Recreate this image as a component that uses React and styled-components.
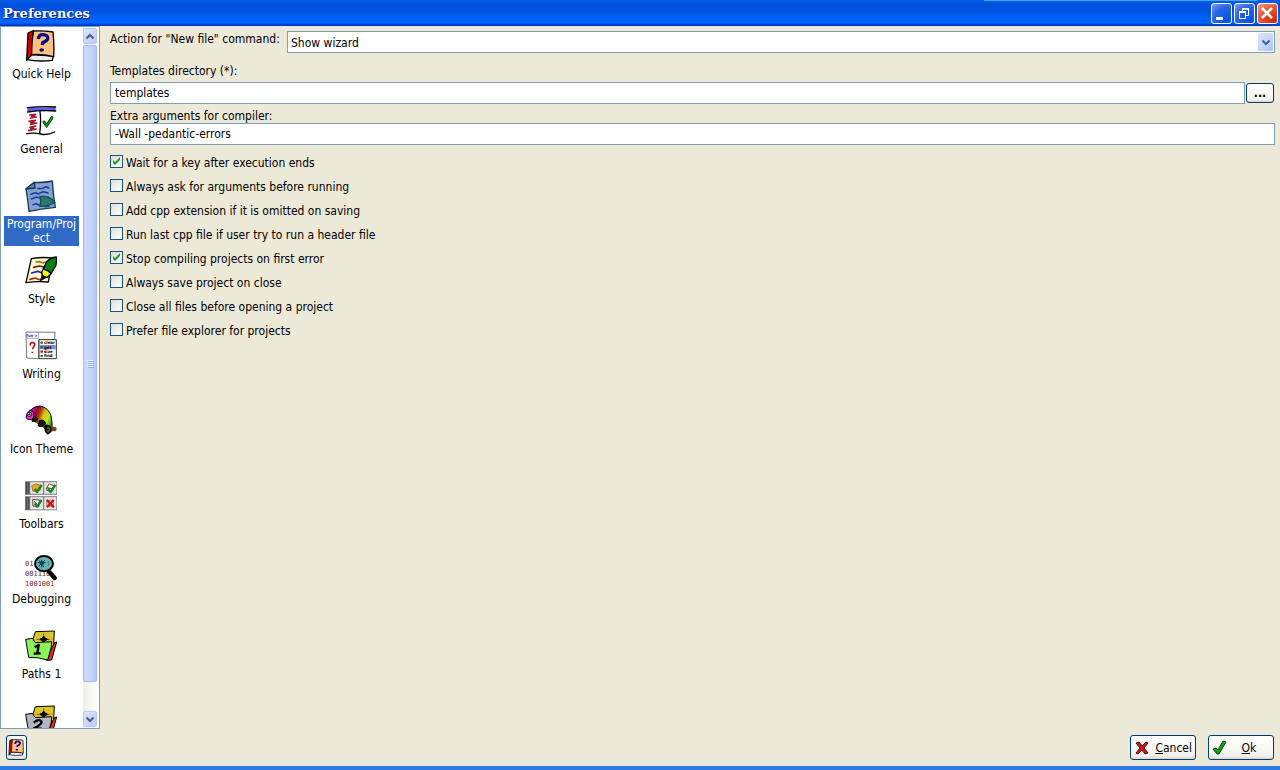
import React from 'react'
import styled, { createGlobalStyle } from 'styled-components'

const GlobalStyle = createGlobalStyle`
    * {
        box-sizing: border-box;
    }

    body {
        margin: 0;
        overflow: hidden;
    }

    body, button, input, select {
        font-family: 'DejaVu Sans Condensed', 'DejaVu Sans', sans-serif;
        font-stretch: condensed;
        font-size: 12px;
        color: #000;
    }
`

const Window = styled.div`
    display: flex;
    flex-direction: column;
    height: 100vh;
    background: #ece9d8;
    border-bottom: 4px solid #2f7be6;
`

const TitleBar = styled.header`
    position: relative;
    display: flex;
    flex: none;
    align-items: center;
    gap: 2px;
    height: 26px;
    padding: 0 2px 0 3px;
    background: linear-gradient(#0a5be8 0, #0050dd 20%, #0053e4 45%, #0060f8 65%, #0066ff 88%, #0046d8 94%, #0036c0 100%);

    /* light edge above the caption buttons */
    &::before {
        content: '';
        position: absolute;
        top: 0;
        right: 23px;
        width: 273px;
        height: 1px;
        background: #3aaaf0;
    }
`

const Title = styled.h1`
    flex: 1;
    margin: 0;
    font-family: 'DejaVu Serif', serif;
    font-stretch: normal;
    font-size: 13px;
    font-weight: bold;
    color: #fff;
    text-shadow: 1px 1px #0a1883;
`

const CaptionButton = styled.button`
    display: flex;
    width: 21px;
    height: 21px;
    padding: 0;
    border: 1px solid #fff;
    border-radius: 3px;
    background: ${props => props.$close
        ? 'radial-gradient(circle at 85% 90%, #cc2f00 0, #e2532d 55%, #f0a08a 100%)'
        : 'radial-gradient(circle at 85% 90%, #0054e9 0, #2a63e4 60%, #7d9ff0 100%)'};
`

const Body = styled.div`
    display: flex;
    flex: 1;
    min-height: 0;
`

const Sidebar = styled.nav`
    display: flex;
    flex: none;
    justify-content: space-between;
    width: 100px;
    padding-right: 2px;
    border: 1px solid #7f9db9;
    background: #fff;
`

const PageList = styled.div`
    display: flex;
    flex-direction: column;
    width: 81px;
    padding: 3px;
    overflow: hidden;
`

const PageItem = styled.button`
    display: flex;
    flex: none;
    flex-direction: column;
    align-items: center;
    gap: 4px;
    height: 75px;
    padding: 0;
    border: 0;
    background: none;
`

const PageIcon = styled.svg`
    flex: none;
    width: 32px;
    height: 32px;
    margin-right: 2px;
`

const PageLabel = styled.span`
    width: 75px;
    padding: 1px 0;
    line-height: 14px;
    word-break: break-all;
    color: ${props => props.$selected ? '#fff' : '#000'};
    background: ${props => props.$selected ? '#316ac5' : 'none'};
`

const ScrollBar = styled.div`
    display: flex;
    flex: none;
    flex-direction: column;
    width: 14px;
    padding: 1px 0;
    background: linear-gradient(90deg, #eeede5, #fefefb);
`

const ScrollButton = styled.button`
    display: flex;
    flex: none;
    align-items: center;
    justify-content: center;
    height: 16px;
    padding: 0;
    border: 1px solid #b4c8f6;
    border-radius: 2px;
    background: linear-gradient(135deg, #dbe5fe, #b9cbf8);
`

const Thumb = styled.div`
    display: flex;
    flex: 1;
    flex-direction: column;
    align-items: center;
    justify-content: center;
    gap: 1px;
    margin: 1px 0 29px;
    border: 1px solid #a5bbee;
    border-radius: 2px;
    background: linear-gradient(90deg, #c9d8fc, #c5d4fd 60%, #b4c8f6);
`

const GripLine = styled.span`
    width: 6px;
    height: 1px;
    background: #eef4fe;
    box-shadow: 1px 1px #8cb0f8;
`

const Form = styled.main`
    flex: 1;
    min-width: 0;
    padding: 5px 5px 0 10px;
`

const Field = styled.div`
    display: flex;
    align-items: center;
    gap: 1px;
`

const InlineLabel = styled.label`
    width: 176px;
    padding-bottom: 6px;
    line-height: 16px;
    white-space: nowrap;
`

const TopLabel = styled.label`
    display: block;
    padding-top: ${props => props.$tight ? 5 : 11}px;
    padding-bottom: ${props => props.$tight ? 0 : 4}px;
    line-height: 14px;
`

const TextInput = styled.input`
    flex: 1;
    width: 100%;
    min-width: 0;
    height: 22px;
    padding: 0 4px;
    border: 1px solid #7f9db9;
    background: #fff;
    outline: 0;
`

const SelectBox = styled.div`
    position: relative;
    flex: 1;
`

const Select = styled.select`
    display: block;
    width: 100%;
    height: 22px;
    padding: 1px 3px 0;
    border: 1px solid #7f9db9;
    border-radius: 0;
    background: #fff;
    appearance: none;
`

const SelectArrow = styled.span`
    position: absolute;
    top: 2px;
    right: 2px;
    display: flex;
    align-items: center;
    justify-content: center;
    width: 15px;
    height: 18px;
    border-radius: 1px;
    background: linear-gradient(135deg, #dbe5fe, #aec5f8);
    pointer-events: none;
`

const Button = styled.button`
    display: flex;
    flex: none;
    align-items: center;
    justify-content: center;
    width: ${props => props.$width}px;
    height: ${props => props.$height}px;
    padding: 0 3px;
    border: 1px solid #003c74;
    border-radius: 3px;
    background: linear-gradient(#fff, #f4f3ee 85%, #d9d5c9);
`

const BrowseButton = styled(Button)`
    margin-right: 1px;
    font-weight: bold;
`

const HelpButton = styled(Button)`
    padding: 0 1px;
`

const Checks = styled.div`
    padding-top: 5px;
`

const CheckRow = styled.div`
    display: flex;
    align-items: center;
    gap: 3px;
    height: 24px;
`

const CheckLabel = styled.label`
    padding-top: 2px;
    line-height: 15px;
`

const CheckBox = styled.input`
    width: 13px;
    height: 13px;
    margin: 0 0 1px;
    border: 1px solid #1c5180;
    background: linear-gradient(135deg, #dcdcd7, #fff);
    appearance: none;

    &:checked {
        background: url("data:image/svg+xml,%3Csvg xmlns='http://www.w3.org/2000/svg' viewBox='0 0 11 11'%3E%3Cpath d='M2 4v3l2 2 5-5V1L4 6z' fill='%2321a121'/%3E%3C/svg%3E"), linear-gradient(135deg, #dcdcd7, #fff);
    }
`

const Footer = styled.footer`
    display: flex;
    flex: none;
    justify-content: space-between;
    padding: 6px;
`

const Actions = styled.div`
    display: flex;
    gap: 12px;
`

const ActionLabel = styled.span`
    flex: 1;
    text-align: ${props => props.$align};
`

// page icons are all drawn on a 96x96 grid
const HelpArt = () => (
  <g stroke='#000' strokeWidth='4' strokeLinejoin='round'>
    <path d='M9 9 25 2 21 73 5 91z' fill='#d40000' />
    <path d='M21 74 85 78 82 91Q40 96 6 89z' fill='#eee' />
    <path d='M26 3Q55 1 84 6Q88 42 86 80Q54 72 20 74Q20 30 26 3z' fill='#ffc080' />
    <path d='M40 27Q42 13 54 14Q69 15 68 26Q66 34 53 38L52 45' fill='none' stroke='#00008c' strokeWidth='10' />
    <ellipse cx='50' cy='60' rx='7' ry='5' fill='#00008c' stroke='none' />
  </g>
)

const GeneralArt = () => (
  <g fill='none' stroke='#000' strokeWidth='4' strokeLinecap='round'>
    <path d='M7 7H92V18H7z' fill='#6060f0' stroke='none' />
    <path d='M7 8Q50 3 92 6M8 21Q50 15 92 18M45 20Q49 48 44 86M5 86Q28 82 47 87T89 81' />
    <path d='M14 30 32 28M17 39 34 36M12 49 31 46M17 58 35 54M15 67 32 63M11 77 34 72M20 34 29 32M18 53 27 52M17 72 26 69' stroke='#a51828' strokeWidth='5' />
    <path d='M57 51 65 62 81 38' stroke='#064806' strokeWidth='9' />
    <path d='M57 51 65 62 81 38' stroke='#109020' strokeWidth='5' />
  </g>
)

const ProgramArt = () => (
  <g fill='none' stroke='#193456' strokeWidth='4' strokeLinejoin='round' strokeLinecap='round'>
    <path d='M28 7Q58 9 82 3Q84 42 91 82Q48 86 12 94Q8 55 3 27z' fill='#82a4d0' />
    <path d='M28 7 30 24 3 27z' fill='#6385b6' />
    <path d='M39 26 53 25 64 20 71 24M18 43 31 38 40 42 54 35 69 39M19 57 34 51 46 54M24 74 33 71 43 76M60 80 72 78' stroke='#253ca5' strokeWidth='5' />
    <path d='M45 50Q70 44 90 67Q72 80 44 79Q50 64 45 50z' fill='#28786e' stroke='#174b58' />
  </g>
)

const StyleArt = () => (
  <g fill='none' stroke='#000' strokeWidth='4' strokeLinejoin='round' strokeLinecap='round'>
    <path d='M19 11Q50 5 84 9L70 81Q32 78 3 83z' fill='#fff9d2' />
    <path d='M33 21 45 20 53 24 65 20' stroke='#977b17' strokeWidth='5' />
    <path d='M26 37 43 33 61 37' stroke='#771818' strokeWidth='5' />
    <path d='M20 54 38 49 53 55' stroke='#2020c0' strokeWidth='5' />
    <path d='M15 73 31 69 43 74' stroke='#b52020' strokeWidth='5' />
    <path d='M94 6Q76 7 64 22L55 42Q69 45 78 56L92 33Q96 19 94 6z' fill='#078015' />
    <path d='M55 42Q69 45 78 56L67 67 53 66 50 51z' fill='#ffff00' />
    <path d='M52 61 62 67 47 76z' fill='#000' />
  </g>
)

const WritingArt = () => (
  <g stroke='#333' strokeWidth='2' fontFamily='DejaVu Sans' fontWeight='bold'>
    <path d='M3 6 90 7 89 29 41 29 41 86 5 84z' fill='#fff' />
    <path d='M4 25 41 25 41 7' fill='none' stroke='#888' />
    <text x='4' y='21' fontSize='12' fill='#2525d8' stroke='none'>fun-&gt;</text>
    <path d='M16 47Q15 36 24 38Q33 40 27 49L22 57M22 65V69' fill='none' stroke='#a01622' strokeWidth='5' />
    <path d='M42 29H94V86H42z' fill='#fff' strokeWidth='3' />
    <path d='M44 45H92V58H44z' fill='#8686d0' stroke='none' />
    <g stroke='none'>
      <circle cx='50' cy='38' r='4' fill='#147c2c' />
      <circle cx='50' cy='52' r='4' fill='#147c2c' />
      <circle cx='50' cy='65' r='4' fill='#bc2020' />
      <circle cx='50' cy='78' r='4' fill='#147c2c' />
      <text x='57' y='43' fontSize='13'>clear</text>
      <text x='57' y='56' fontSize='13'>get</text>
      <text x='57' y='69' fontSize='13'>size</text>
      <text x='57' y='82' fontSize='13'>find</text>
    </g>
  </g>
)

const ThemeArt = () => (
  <g stroke='#000' strokeWidth='3' strokeLinejoin='round'>
    <defs>
      <linearGradient id='skin' gradientUnits='userSpaceOnUse' x1='22' x2='84' y1='22' y2='46'>
        <stop offset='0' stopColor='#c010a0' />
        <stop offset='.15' stopColor='#8c0c20' />
        <stop offset='.32' stopColor='#a83010' />
        <stop offset='.52' stopColor='#e0b81c' />
        <stop offset='.75' stopColor='#b4ee18' />
        <stop offset='1' stopColor='#3c8a18' />
      </linearGradient>
    </defs>
    <path d='M12 19Q28 2 46 3Q70 8 78 32Q84 56 80 78L70 84Q60 72 54 64L24 42z' fill='url(#skin)' />
    <path d='M3 38Q4 22 16 16Q26 16 27 28Q28 38 20 44Q6 46 3 38z' fill='#ff1ee6' />
    <path d='M32 38 74 64 92 66Q99 74 90 79L72 79 28 50z' fill='#79482b' stroke='none' />
    <path d='M24 38Q33 32 38 40Q34 53 21 49zM46 45Q62 46 61 56Q50 70 39 62zM60 62Q74 58 79 70Q78 86 68 87Q58 82 60 62z' fill='#111611' />
    <path d='M66 70Q74 66 74 75Q70 82 66 77' fill='none' stroke='#48703c' strokeWidth='4' />
    <ellipse cx='13' cy='28' rx='7' ry='6' fill='#fff' />
    <circle cx='13' cy='28' r='2' />
  </g>
)

const ToolbarsArt = () => (
  <g fill='none' strokeLinejoin='round'>
    <path d='M0 4H96V44H0zM0 49H96V91H0z' fill='#777' />
    <path d='M5 6V42M11 6V42M5 51V89M11 51V89' stroke='#444' strokeWidth='3' />
    <path d='M17 8H53V40H17zM59 8H93V40H59zM17 53H53V87H17zM59 53H93V87H59z' fill='#e1e1de' stroke='#fff' strokeWidth='2' />
    <path d='M20 17 32 12 48 16 46 30 24 34z' fill='#e7a92c' stroke='#bd7418' strokeWidth='3' />
    <path d='M66 22 72 12 87 17 82 28zM64 24 85 26 80 34 65 31z' fill='#f8f8e8' stroke='#77584a' strokeWidth='3' />
    <path d='M23 58 43 60 42 80 24 78zM27 64 38 74' fill='#eee' stroke='#654b50' strokeWidth='3' />
    <path d='M65 61H85V79H65z' fill='#e4c9be' stroke='#81636b' strokeWidth='2' />
    <path d='M29 27 36 36 50 15M69 27 77 36 91 15M29 70 36 80 50 60' stroke='#168628' strokeWidth='7' />
    <path d='M65 60 87 82M86 60 66 82' stroke='#ca1814' strokeWidth='7' />
  </g>
)

const DebugArt = () => (
  <g fontFamily='DejaVu Sans Mono' fontSize='21' fill='#662b32'>
    <text x='0' y='32'>01</text>
    <text x='0' y='63'>001110</text>
    <text x='0' y='94'>1001001</text>
    <path d='M73 51 89 69' stroke='#000' strokeWidth='13' strokeLinecap='round' />
    <ellipse cx='57' cy='26' rx='27' ry='23' fill='#65b5b5' stroke='#000' strokeWidth='6' />
    <path d='M38 23H62M40 34 60 16M42 16 57 36M50 14V38' fill='none' stroke='#103b44' strokeWidth='3' />
    <circle cx='50' cy='25' r='6' fill='#173f48' />
    <path d='M70 18 72 34' stroke='#468b8d' strokeWidth='3' />
  </g>
)

const PathsArt = ({ color, digit }) => (
  <g stroke='#000' strokeWidth='3' strokeLinejoin='round'>
    <path d='M82 41 95 36 80 90 64 91z' fill='#df2d20' />
    <path d='M31 5 88 3 86 42 71 75 20 40z' fill='#d9c52b' />
    <path d='M56 11V43M35 28H80' stroke='#a02216' strokeDasharray='6 5' />
    <path d='M56 18 60 24 68 28 60 32 56 38 52 32 44 28 52 24z' fill='#000' />
    <path d='M2 28 22 25 31 38 80 35 79 51 68 90Q38 81 11 82z' fill={color} />
    {digit === 1
      ? <path d='M29 52 41 45 37 70M26 71 47 70' fill='none' strokeWidth='7' />
      : <path d='M26 53Q43 39 50 51Q48 60 27 70L50 71' fill='none' strokeWidth='7' />}
  </g>
)

const Chevron = ({ up }) => (
  <svg width='8' height='7' viewBox='0 0 8 7' fill='none' stroke='#4d6185' strokeWidth='2'>
    <path d={up ? 'M.5 5.5 4 2 7.5 5.5' : 'M.5 1.5 4 5 7.5 1.5'} />
  </svg>
)

// the last page sits below the fold, only its icon shows
const pages = [
  { id: 'help', label: 'Quick Help', art: <HelpArt /> },
  { id: 'general', label: 'General', art: <GeneralArt /> },
  { id: 'program', label: 'Program/Project', art: <ProgramArt />, selected: true },
  { id: 'style', label: 'Style', art: <StyleArt /> },
  { id: 'writing', label: 'Writing', art: <WritingArt /> },
  { id: 'theme', label: 'Icon Theme', art: <ThemeArt /> },
  { id: 'toolbars', label: 'Toolbars', art: <ToolbarsArt /> },
  { id: 'debug', label: 'Debugging', art: <DebugArt /> },
  { id: 'paths1', label: 'Paths 1', art: <PathsArt color='#8cf25a' digit={1} /> },
  { id: 'paths2', art: <PathsArt color='#b4b4c2' digit={2} /> }
]

const options = [
  { id: 'wait', label: 'Wait for a key after execution ends', on: true },
  { id: 'args', label: 'Always ask for arguments before running' },
  { id: 'cpp', label: 'Add cpp extension if it is omitted on saving' },
  { id: 'header', label: 'Run last cpp file if user try to run a header file' },
  { id: 'stop', label: 'Stop compiling projects on first error', on: true },
  { id: 'save', label: 'Always save project on close' },
  { id: 'close', label: 'Close all files before opening a project' },
  { id: 'explorer', label: 'Prefer file explorer for projects' }
]

class App extends React.Component {
  render () {
    return (
      <Window>
        <GlobalStyle />
        <TitleBar>
          <Title>Preferences</Title>
          <CaptionButton aria-label='Minimize'>
            <svg width='19' height='19'><path d='M4 13H11V16H4z' fill='#fff' /></svg>
          </CaptionButton>
          <CaptionButton aria-label='Restore'>
            <svg width='19' height='19' fill='none' stroke='#fff'>
              <path d='M7 5.5H14M7.5 5V8M13.5 5V11.5H11M4 8.5H11M4.5 8V14.5H10.5V8' />
              <path d='M7 4.5H14M4 7.5H11' />
            </svg>
          </CaptionButton>
          <CaptionButton $close aria-label='Close'>
            <svg width='19' height='19'><path d='M4 4 14 14M14 4 4 14' stroke='#fff' strokeWidth='2.6' /></svg>
          </CaptionButton>
        </TitleBar>
        <Body>
          <Sidebar>
            <PageList>
              {pages.map(page => (
                <PageItem key={page.id} aria-label={page.label || 'Paths 2'}>
                  <PageIcon viewBox='0 0 96 96'>{page.art}</PageIcon>
                  {page.label && <PageLabel $selected={page.selected}>{page.label}</PageLabel>}
                </PageItem>
              ))}
            </PageList>
            <ScrollBar>
              <ScrollButton aria-label='Scroll up'><Chevron up /></ScrollButton>
              <Thumb>
                <GripLine />
                <GripLine />
                <GripLine />
                <GripLine />
              </Thumb>
              <ScrollButton aria-label='Scroll down'><Chevron /></ScrollButton>
            </ScrollBar>
          </Sidebar>
          <Form>
            <Field>
              <InlineLabel htmlFor='action'>Action for "New file" command:</InlineLabel>
              <SelectBox>
                <Select id='action'>
                  <option>Show wizard</option>
                </Select>
                <SelectArrow><Chevron /></SelectArrow>
              </SelectBox>
            </Field>
            <TopLabel htmlFor='templates'>Templates directory (*):</TopLabel>
            <Field>
              <TextInput id='templates' defaultValue='templates' />
              <BrowseButton $width={28} $height={20}>...</BrowseButton>
            </Field>
            <TopLabel $tight htmlFor='compiler'>Extra arguments for compiler:</TopLabel>
            <Field>
              <TextInput id='compiler' defaultValue='-Wall -pedantic-errors' />
            </Field>
            <Checks>
              {options.map(option => (
                <CheckRow key={option.id}>
                  <CheckBox type='checkbox' id={option.id} defaultChecked={option.on} />
                  <CheckLabel htmlFor={option.id}>{option.label}</CheckLabel>
                </CheckRow>
              ))}
            </Checks>
          </Form>
        </Body>
        <Footer>
          <HelpButton $width={21} $height={25} aria-label='Help'>
            <svg width='17' height='17' viewBox='0 0 96 96'><HelpArt /></svg>
          </HelpButton>
          <Actions>
            <Button $width={66} $height={25}>
              <svg width='16' height='16' viewBox='0 0 16 16'>
                <path d='M2 3 5 2 8 6 12 2 14 3 10 8 14 13 11 14 8 10 4 14 2 13 6 8z' fill='#d01818' stroke='#4c0808' />
              </svg>
              <ActionLabel $align='right'><u>C</u>ancel</ActionLabel>
            </Button>
            <Button $width={66} $height={25}>
              <svg width='16' height='16' viewBox='0 0 16 16'>
                <path d='M1 9 4 8 6 10 11 1 14 2 7 14 5 14z' fill='#10a018' stroke='#075008' />
              </svg>
              <ActionLabel $align='center'><u>O</u>k</ActionLabel>
            </Button>
          </Actions>
        </Footer>
      </Window>
    )
  }
}

export default App
